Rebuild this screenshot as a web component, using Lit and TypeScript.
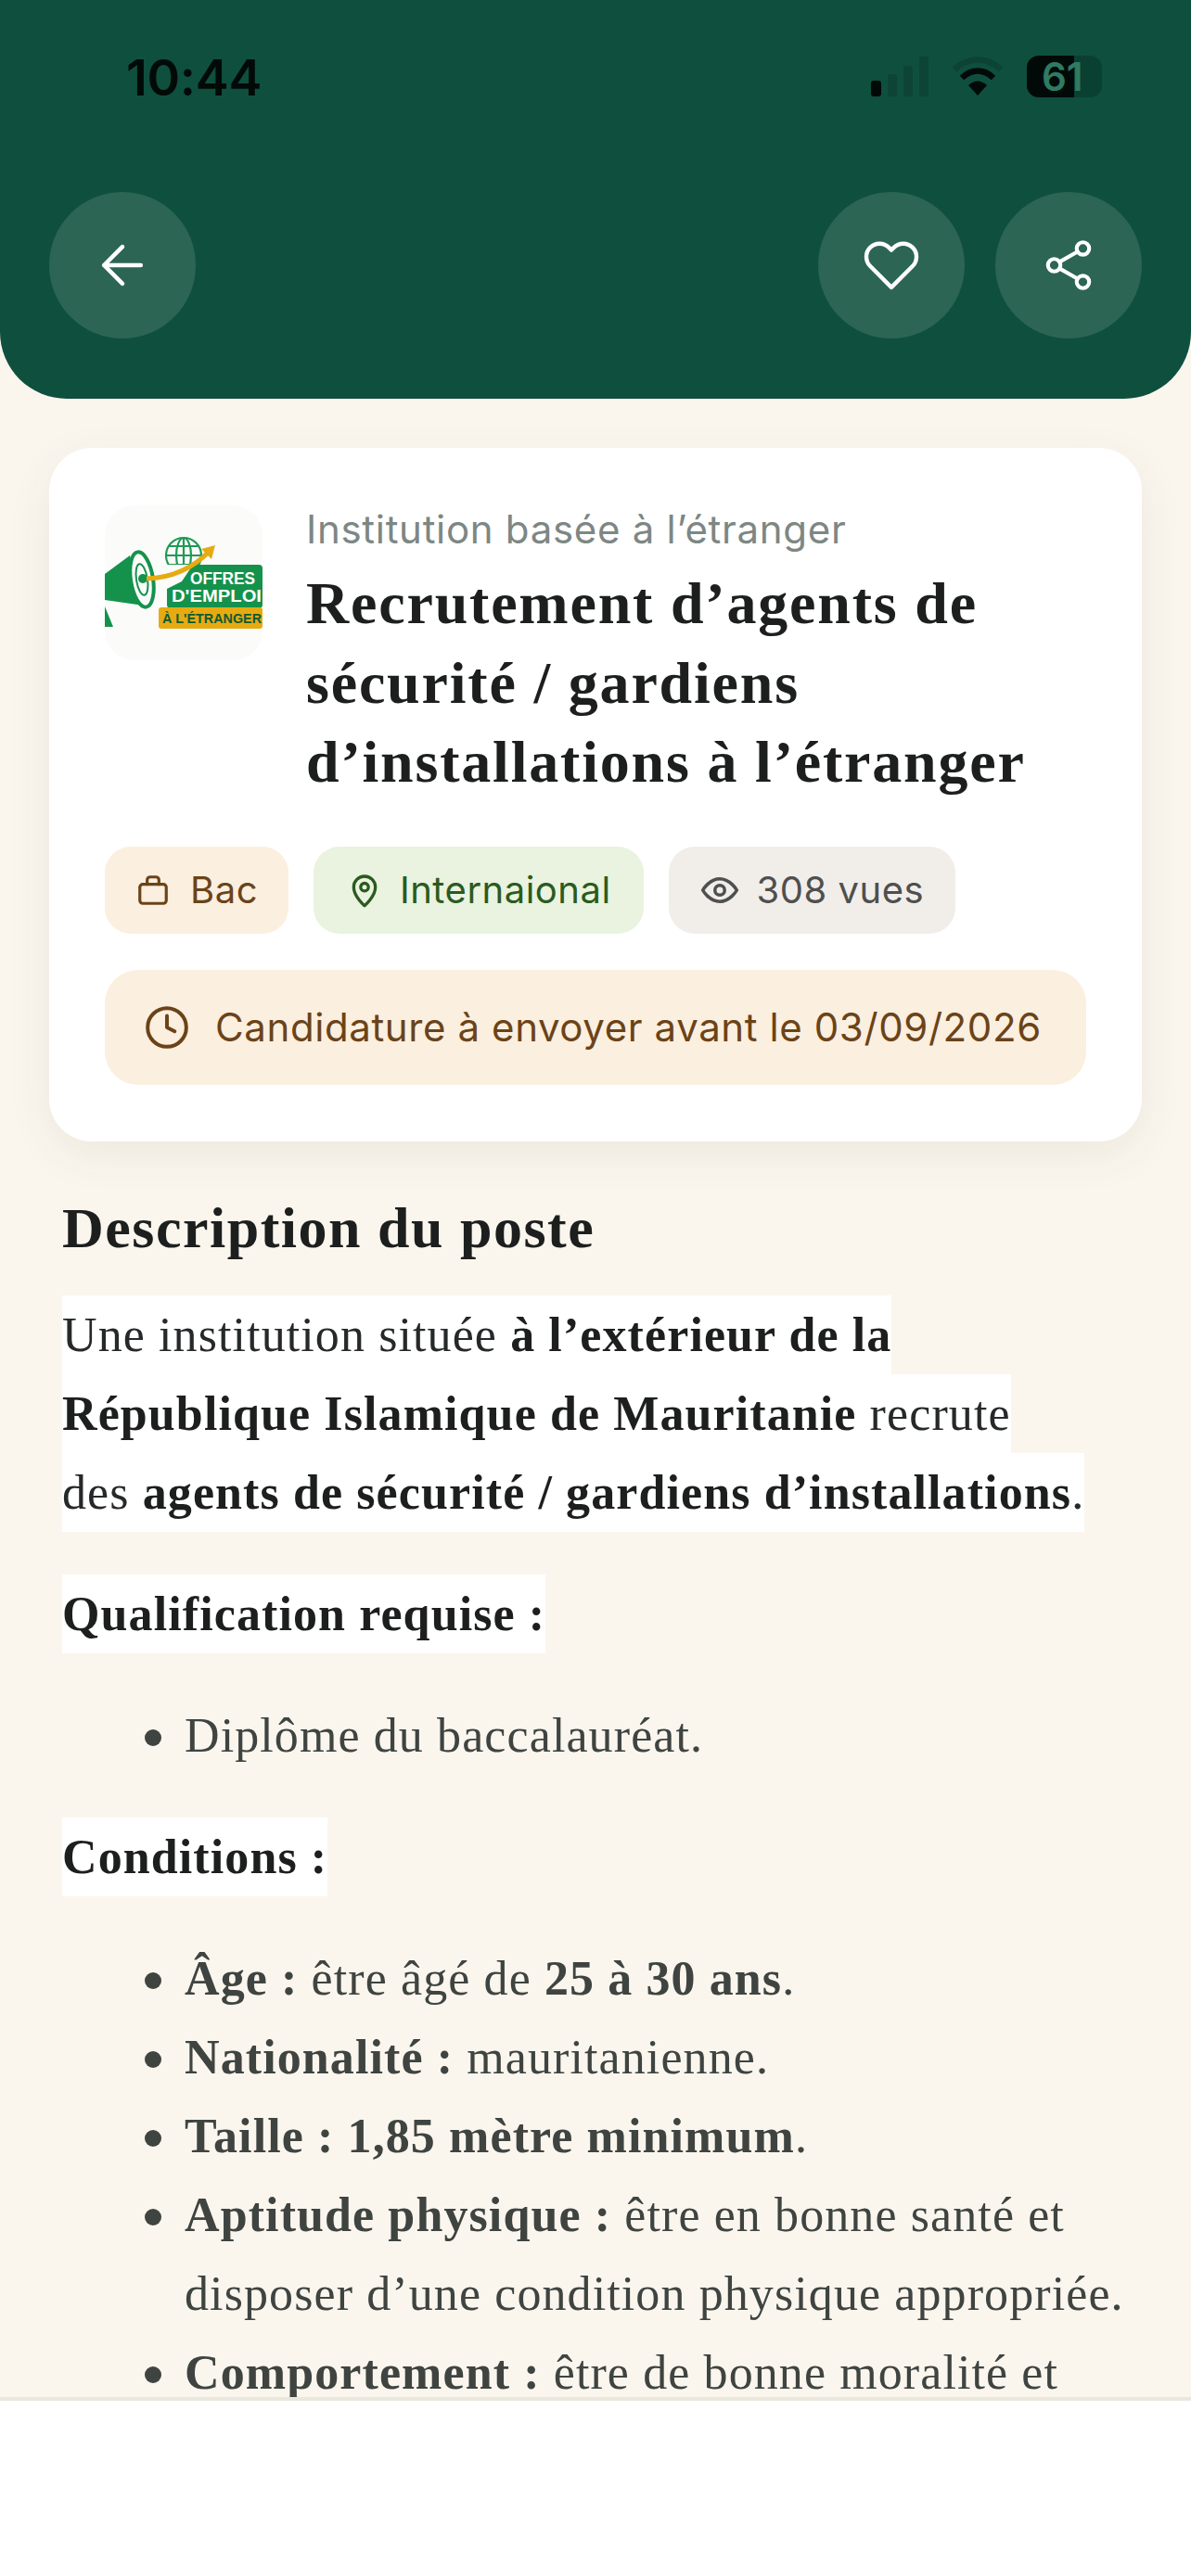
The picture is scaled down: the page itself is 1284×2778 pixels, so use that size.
import { LitElement, html, css, svg } from "lit";
import { customElement } from "lit/decorators.js";

const strokeIcon = (cls: string, body: unknown) => html`<svg class=${cls} viewBox="0 0 24 24" fill="none" stroke="currentColor" stroke-linecap="round" stroke-linejoin="round">${body}</svg>`;

@customElement("app-root")
export class AppRoot extends LitElement {
  static styles = css`
    :host { display: flex; flex-direction: column; width: 1284px; height: 2778px; overflow: hidden; background: #fff; font-family: Inter, "Liberation Sans", sans-serif; }
    .main { height: 2585px; flex: none; overflow: hidden; background: #faf6ee; }
    .footer { flex: 1; background: #fff; border-top: 4px solid #e9e7de; }

    .header { height: 430px; box-sizing: border-box; background: #0f4f3e; border-radius: 0 0 72px 72px; padding: 56px 53px 0; }
    .status { height: 151px; display: flex; justify-content: space-between; align-items: flex-start; }
    .time { font-size: 54px; line-height: 56px; font-weight: 600; color: #020a07; margin-left: 83px; letter-spacing: -0.3px; }
    .sys { display: flex; align-items: center; gap: 0; margin-right: 42px; margin-top: -7px; }
    .sys svg { display: block; }
    .sys text { font-family: Inter, sans-serif; font-weight: 600; font-size: 42px; }
    .actions { display: flex; align-items: center; gap: 33px; }
    .spacer { flex: 1; }
    .round { width: 158px; height: 158px; border-radius: 50%; background: #2c6553; color: #fff; display: flex; align-items: center; justify-content: center; }
    .i-back { width: 68px; height: 68px; stroke-width: 1.6; }
    .i-heart { width: 62px; height: 62px; stroke-width: 1.7; }
    .i-share { width: 62px; height: 62px; stroke-width: 1.6; }

    .card { margin: 53px 53px 0; padding: 60px; background: #fff; border-radius: 46px; box-shadow: 0 14px 50px rgba(70, 50, 20, 0.07); height: 748px; box-sizing: border-box; }
    .top { display: flex; gap: 47px; }
    .logo { flex: none; width: 170px; height: 167px; margin-top: 2px; border-radius: 32px; background: #fbfbfa; overflow: hidden; }
    .logo svg { display: block; width: 170px; height: 167px; }
    .logo text { font-family: "Liberation Sans", sans-serif; font-weight: 700; }
    .sub { font-size: 42px; line-height: 50px; color: #7d8784; margin-top: 3px; letter-spacing: 0.7px; }
    .title { margin: 12px 0 0; font-family: "Liberation Serif", serif; font-weight: 700; font-size: 64px; line-height: 85.5px; color: #1d1f1e; letter-spacing: 1.8px; }
    .chips { display: flex; gap: 27px; margin-top: 48px; }
    .chip { height: 94px; box-sizing: border-box; border-radius: 28px; display: flex; align-items: center; font-size: 40px; letter-spacing: 0.5px; }
    .chip svg { flex: none; }
    .amber { background: #fbefdf; color: #6b4318; padding: 0 33px; gap: 21px; }
    .green { background: #e9f3df; color: #2b5a1f; padding: 0 35px; gap: 18px; }
    .grey { background: #f1eeea; color: #4f4f4f; padding: 0 34px; gap: 19px; }
    .i-bag { width: 38px; height: 38px; stroke-width: 2; }
    .i-pin { width: 40px; height: 40px; stroke-width: 2; }
    .i-eye { width: 42px; height: 42px; stroke-width: 2; }
    .deadline { margin-top: 39px; height: 124px; border-radius: 36px; background: #fbefdf; color: #6b4318; display: flex; align-items: center; padding: 0 42px; gap: 27px; font-size: 42px; letter-spacing: 0.6px; white-space: nowrap; }
    .i-clock { flex: none; width: 50px; height: 50px; stroke-width: 1.9; }

    .content { padding: 57px 67px 0; font-family: "Liberation Serif", serif; font-size: 52px; line-height: 85px; color: #3f4441; letter-spacing: 1.1px; }
    h2 { margin: 0 0 37px; font-size: 62px; line-height: 72px; font-weight: 700; color: #1d1f1e; letter-spacing: 1.5px; }
    .lead { margin: 0 0 46px; color: #26292a; }
    .line { display: block; width: fit-content; background: #fff; }
    .lead b, .label { font-weight: 700; color: #1d1f1e; }
    .label { margin: 0 0 46px; }
    ul { margin: 0 0 46px; padding: 0 0 0 132px; list-style: none; }
    li { position: relative; }
    li::before { content: ""; position: absolute; left: -43px; top: 36px; width: 18px; height: 18px; border-radius: 50%; background: #3f4441; }
    li b { font-weight: 700; }
  `;

  private logo() {
    return html`<svg viewBox="0 0 170 167" role="img" aria-label="Offres d'emploi à l'étranger">
      ${svg`
      <g fill="none" stroke="#1f9a55" stroke-width="2.2">
        <circle cx="85" cy="54" r="19"/><ellipse cx="85" cy="54" rx="8" ry="19"/>
        <path d="M66 54h38M69 44h32M69 64h32M85 35v38"/>
      </g>
      <rect x="67" y="64" width="103" height="47" rx="4" fill="#14924c"/>
      <path d="M67 64h28l-12 18-16 8z" fill="#fbfbfa"/>
      <rect x="58" y="110" width="112" height="23" rx="3" fill="#e6ab12"/>
      <path d="M0 74 27 54 42 108 0 102z" fill="#14924c"/>
      <ellipse cx="40" cy="80" rx="12" ry="30" transform="rotate(-9 40 80)" fill="#fbfbfa" stroke="#14924c" stroke-width="4"/>
      <ellipse cx="40" cy="80" rx="6" ry="17" transform="rotate(-9 40 80)" fill="none" stroke="#14924c" stroke-width="2"/>
      <circle cx="41" cy="79" r="5" fill="#14924c"/>
      <path d="M0 109 9 131H0z" fill="#14924c"/>
      <path d="M45 79C74 78 95 68 113 49" fill="none" stroke="#e6ab12" stroke-width="5"/>
      <path d="M104 47 119 43 115 58z" fill="#e6ab12"/>
      <text x="92" y="85" font-size="18.5" fill="#fff" textLength="70" lengthAdjust="spacingAndGlyphs">OFFRES</text>
      <text x="72" y="104" font-size="18.5" fill="#fff" textLength="97" lengthAdjust="spacingAndGlyphs">D'EMPLOI</text>
      <text x="62" y="127" font-size="14.5" fill="#0f5a34" textLength="107" lengthAdjust="spacingAndGlyphs">À L'ÉTRANGER</text>
      `}
    </svg>`;
  }

  private sys() {
    return html`<div class="sys">
      <svg width="250" height="66" viewBox="0 -10 250 66">
        ${svg`
        <rect x="0" y="28" width="11" height="17" rx="3" fill="#020a07"/>
        <rect x="18" y="21" width="10" height="24" rx="2.5" fill="#0d4435"/>
        <rect x="35" y="12" width="10" height="33" rx="2.5" fill="#0d4435"/>
        <rect x="52" y="2" width="10" height="43" rx="2.5" fill="#0d4435"/>
        <path d="M90 16C104 2 126 2 140 16" fill="none" stroke="#0c4334" stroke-width="6.5"/>
        <path d="M98 25C108 15 122 15 132 25" fill="none" stroke="#020a07" stroke-width="6.5"/>
        <path d="M115 44 105 33C111 27 119 27 125 33z" fill="#020a07"/>
        <rect x="168" y="1" width="81" height="45" rx="13" fill="#0a4032"/>
        <path d="M181 1H219V46H181A13 13 0 0 1 168 33V14A13 13 0 0 1 181 1z" fill="#020a07"/>
        <text x="184" y="39" fill="#2f7a63">61</text>
        `}
      </svg>
    </div>`;
  }

  render() {
    return html`
      <div class="main">
        <header class="header">
          <div class="status"><span class="time">10:44</span>${this.sys()}</div>
          <div class="actions">
            <div class="round">${strokeIcon("i-back", svg`<path d="M19 12H5M12 19l-7-7 7-7"/>`)}</div>
            <div class="spacer"></div>
            <div class="round">${strokeIcon("i-heart", svg`<path d="M20.84 4.61a5.5 5.5 0 0 0-7.78 0L12 5.67l-1.06-1.06a5.5 5.5 0 0 0-7.78 7.78L12 21.23l8.84-8.84a5.5 5.5 0 0 0 0-7.78z"/>`)}</div>
            <div class="round">${strokeIcon("i-share", svg`<circle cx="18" cy="5" r="2.6"/><circle cx="6" cy="12" r="2.6"/><circle cx="18" cy="19" r="2.6"/><path d="M8.3 13.4l7.4 4.2M15.7 6.4l-7.4 4.2"/>`)}</div>
          </div>
        </header>

        <section class="card">
          <div class="top">
            <div class="logo">${this.logo()}</div>
            <div>
              <div class="sub">Institution basée à l’étranger</div>
              <h1 class="title">Recrutement d’agents de<br />sécurité / gardiens<br />d’installations à l’étranger</h1>
            </div>
          </div>
          <div class="chips">
            <div class="chip amber">${strokeIcon("i-bag", svg`<rect x="3" y="8" width="18" height="13" rx="2"/><path d="M8 8V5a2 2 0 0 1 2-2h4a2 2 0 0 1 2 2v3"/>`)}Bac</div>
            <div class="chip green">${strokeIcon("i-pin", svg`<path d="M19 10c0 6-7 12-7 12s-7-6-7-12a7 7 0 0 1 14 0z"/><circle cx="12" cy="10" r="2.5"/>`)}Internaional</div>
            <div class="chip grey">${strokeIcon("i-eye", svg`<path d="M1.5 12S5.5 5 12 5s10.500 7 10.500 7-4 7-10.500 7S1.500 12 1.500 12z"/><circle cx="12" cy="12" r="3"/>`)}308 vues</div>
          </div>
          <div class="deadline">${strokeIcon("i-clock", svg`<circle cx="12" cy="12" r="10"/><path d="M12 6v6l4 2"/>`)}Candidature à envoyer avant le 03/09/2026</div>
        </section>

        <section class="content">
          <h2>Description du poste</h2>
          <p class="lead">
            <span class="line">Une institution située <b>à l’extérieur de la</b></span>
            <span class="line"><b>République Islamique de Mauritanie</b> recrute</span>
            <span class="line">des <b>agents de sécurité / gardiens d’installations</b>.</span>
          </p>
          <p class="label"><span class="line">Qualification requise :</span></p>
          <ul><li>Diplôme du baccalauréat.</li></ul>
          <p class="label"><span class="line">Conditions :</span></p>
          <ul>
            <li><b>Âge :</b> être âgé de <b>25 à 30 ans</b>.</li>
            <li><b>Nationalité :</b> mauritanienne.</li>
            <li><b>Taille : 1,85 mètre minimum</b>.</li>
            <li><b>Aptitude physique :</b> être en bonne santé et<br />disposer d’une condition physique appropriée.</li>
            <li><b>Comportement :</b> être de bonne moralité et</li>
          </ul>
        </section>
      </div>
      <div class="footer"></div>
    `;
  }
}
